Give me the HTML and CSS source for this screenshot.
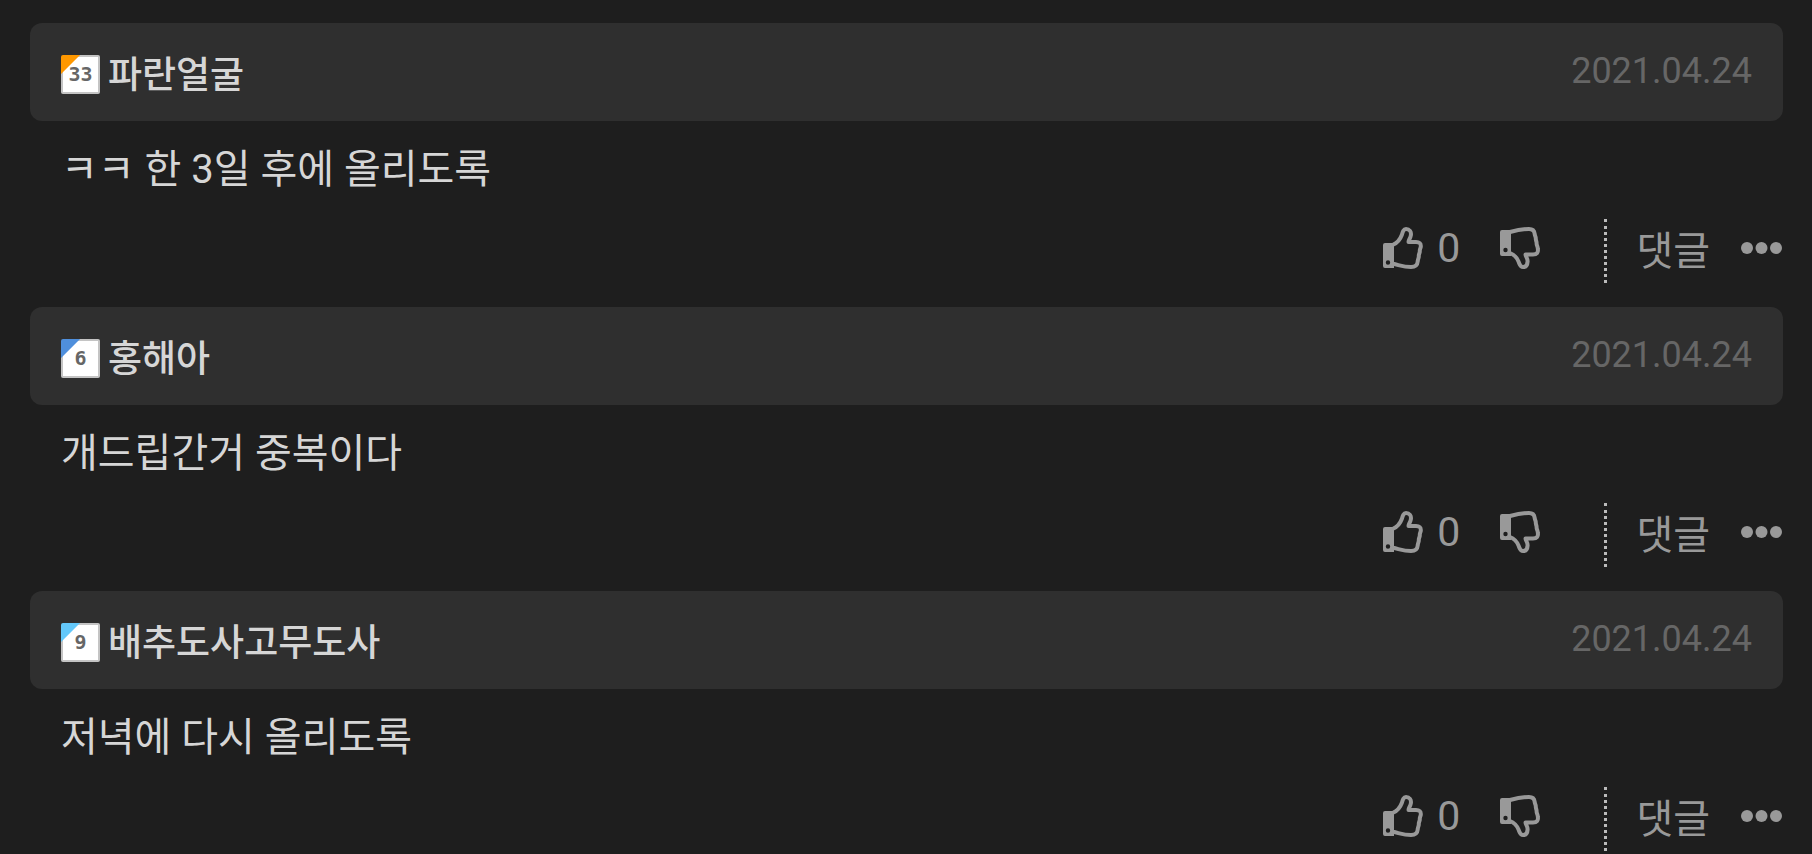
FILE: index.html
```
<!DOCTYPE html>
<html lang="ko">
<head>
    <meta charset="UTF-8">
    <meta name="viewport" content="width=device-width, initial-scale=1.0">
    <title>댓글</title>
    <link rel="stylesheet" href="styles.css">
</head>
<body>
    <!-- 아이콘 모음 -->
    <svg class="sprite" aria-hidden="true">
        <symbol id="thumb-up" viewBox="0 0 40 42">
            <path fill="currentColor" fill-rule="evenodd" d="M2 16H11V41H2Q0 41 0 39V18Q0 16 2 16ZM5 33.3A2.2 2.2 0 1 0 5 37.7A2.2 2.2 0 1 0 5 33.3Z"/>
            <path fill="none" stroke="currentColor" stroke-width="4" stroke-linejoin="round" d="M10 17.8C14 16 17.5 11.5 18.8 8C19.8 4.5 20.5 2 23 2C26.5 2 28.6 5 27.8 8.5C27.3 11.5 25.5 12.8 25.5 15H33C36.5 15 38 16.5 37.8 19.5C37.7 21.5 36.6 22 36.8 24C37 26 35.6 27 35.8 29C36 31 34.8 32 34.8 34C34.4 38.3 32.5 40 28 40C21 40 17 38.3 10 36.8"/>
        </symbol>
        <symbol id="thumb-down" viewBox="0 0 40 42">
            <path fill="currentColor" fill-rule="evenodd" d="M2 3H11V29H2Q0 29 0 27V5Q0 3 2 3ZM5.5 20.8A2.2 2.2 0 1 0 5.5 25.2A2.2 2.2 0 1 0 5.5 20.8Z"/>
            <path fill="none" stroke="currentColor" stroke-width="4" stroke-linejoin="round" d="M10 5C17 3 22 2 29 2C32.5 2 34.2 3.2 34.6 6.5C34.8 9 35.8 9.5 35.8 11.5C35.6 13.5 36.8 14.5 36.6 16.5C36.6 18.5 37.8 19.5 37.8 21.5C38.5 25.5 37 27.4 33 27.4H25.5C25.5 29.5 27.8 31.5 27.6 34.5C27.4 38.5 26 40 23 40C20 40 19.8 37.5 18.5 34.5C17 31 14 27.5 10 26"/>
        </symbol>
        <symbol id="more" viewBox="0 0 41 12">
            <circle cx="6" cy="6" r="6" fill="currentColor"/>
            <circle cx="20.5" cy="6" r="6" fill="currentColor"/>
            <circle cx="35" cy="6" r="6" fill="currentColor"/>
        </symbol>
    </svg>

    <main class="comments">
        <article class="comment">
            <header class="comment-head">
                <span class="level level-orange">33</span>
                <a class="name" href="#">파란얼굴</a>
                <time class="date" datetime="2021-04-24">2021.04.24</time>
            </header>
            <p class="comment-text">ㅋㅋ 한 3일 후에 올리도록</p>
            <div class="actions">
                <button class="vote up" type="button" aria-label="추천"><svg class="thumb"><use href="#thumb-up"/></svg>0</button>
                <button class="vote down" type="button" aria-label="비추천"><svg class="thumb"><use href="#thumb-down"/></svg></button>
                <div class="reply-tools">
                    <button type="button">댓글</button>
                    <button type="button" aria-label="더보기"><svg class="more"><use href="#more"/></svg></button>
                </div>
            </div>
        </article>

        <article class="comment">
            <header class="comment-head">
                <span class="level level-blue">6</span>
                <a class="name" href="#">홍해아</a>
                <time class="date" datetime="2021-04-24">2021.04.24</time>
            </header>
            <p class="comment-text">개드립간거 중복이다</p>
            <div class="actions">
                <button class="vote up" type="button" aria-label="추천"><svg class="thumb"><use href="#thumb-up"/></svg>0</button>
                <button class="vote down" type="button" aria-label="비추천"><svg class="thumb"><use href="#thumb-down"/></svg></button>
                <div class="reply-tools">
                    <button type="button">댓글</button>
                    <button type="button" aria-label="더보기"><svg class="more"><use href="#more"/></svg></button>
                </div>
            </div>
        </article>

        <article class="comment">
            <header class="comment-head">
                <span class="level level-sky">9</span>
                <a class="name" href="#">배추도사고무도사</a>
                <time class="date" datetime="2021-04-24">2021.04.24</time>
            </header>
            <p class="comment-text">저녁에 다시 올리도록</p>
            <div class="actions">
                <button class="vote up" type="button" aria-label="추천"><svg class="thumb"><use href="#thumb-up"/></svg>0</button>
                <button class="vote down" type="button" aria-label="비추천"><svg class="thumb"><use href="#thumb-down"/></svg></button>
                <div class="reply-tools">
                    <button type="button">댓글</button>
                    <button type="button" aria-label="더보기"><svg class="more"><use href="#more"/></svg></button>
                </div>
            </div>
        </article>
    </main>
</body>
</html>
```

FILE: styles.css
```
* {
    box-sizing: border-box;
}
body {
    margin: 0;
    background-color: #1e1e1e;
    color: #d6d6d6;
    font-family: Roboto, 'Noto Sans CJK KR', sans-serif;
    font-size: 40px;
}
.sprite {
    display: none;
}
.comments {
    display: flex;
    flex-direction: column;
    gap: 24px;
    padding: 23px 29px 0 30px;
}
.comment-head {
    display: flex;
    align-items: center;
    gap: 8px;
    height: 98px;
    padding: 4px 31px 0;
    border-radius: 12px;
    background-color: #2f2f2f;
}
/* 레벨 아이콘 */
.level {
    width: 39px;
    height: 39px;
    border: 2px solid transparent;
    border-radius: 2px;
    background:
        linear-gradient(135deg, var(--corner) 13px, transparent 14px) border-box,
        linear-gradient(#fff, #fff) padding-box,
        #c4c4c4 border-box;
    color: #666;
    font: bold 20px/35px 'DejaVu Sans Mono', monospace;
    text-align: center;
}
.level-orange {
    --corner: #ff9800;
}
.level-blue {
    --corner: #4f8fdc;
}
.level-sky {
    --corner: #63c8fa;
}
.name {
    padding-top: 4px;
    color: inherit;
    font-size: 37px;
    font-weight: 500;
    line-height: 48px;
    text-decoration: none;
}
.date {
    margin-left: auto;
    padding-bottom: 6px;
    color: #666;
    font-size: 36px;
    line-height: 48px;
}
.comment-text {
    margin: 0;
    padding: 19px 31px;
    line-height: 60px;
}
.actions {
    display: flex;
    justify-content: flex-end;
    height: 64px;
    color: #999;
}
.actions button {
    display: flex;
    align-items: center;
    padding: 0 0 6px;
    border: none;
    background: none;
    color: inherit;
    font: inherit;
    cursor: pointer;
}
.actions .vote {
    font-size: 41px;
}
.vote.up {
    gap: 14px;
    margin-right: 40px;
}
.vote.down {
    margin-right: 64px;
}
.thumb {
    width: 40px;
    height: 42px;
}
.more {
    width: 41px;
    height: 12px;
}
.reply-tools {
    display: flex;
    gap: 31px;
    padding: 0 1px 0 29px;
    border-left: 3px dotted #bbb;
}
```
